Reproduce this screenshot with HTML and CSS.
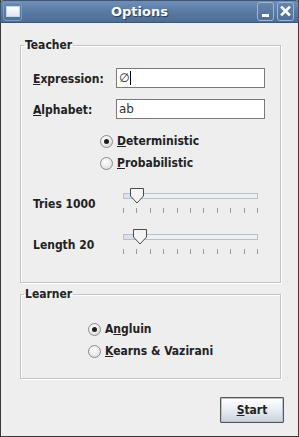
FILE: index.html
```html
<!DOCTYPE html>
<html>
<head>
<meta charset="utf-8">
<link rel="stylesheet" href="styles.css">
</head>
<body>
<div class="window">
  <div class="titlebar">
    <div class="tb-icon"><span class="tb-icon-inner"></span></div>
    <div class="tb-title">Options</div>
    <div class="tb-buttons">
      <div class="tb-btn"><svg width="15" height="17" viewBox="0 0 15 17"><rect x="4" y="11" width="7" height="3" fill="#fff"/></svg></div>
      <div class="tb-btn"><svg width="15" height="17" viewBox="0 0 15 17"><path d="M4 4.5 L11 11.5 M11 4.5 L4 11.5" stroke="#fff" stroke-width="2.6" stroke-linecap="square"/></svg></div>
    </div>
  </div>
  <div class="content">
    <fieldset class="group teacher">
      <legend>Teacher</legend>
      <div class="field-row first">
        <label class="flabel"><u>E</u>xpression:</label>
        <div class="textfield">∅<span class="caret"></span></div>
      </div>
      <div class="field-row">
        <label class="flabel"><u>A</u>lphabet:</label>
        <div class="textfield">ab</div>
      </div>
      <div class="radios teacher-radios">
        <div class="radio-row"><span class="radio checked"></span><span class="rlabel"><u>D</u>eterministic</span></div>
        <div class="radio-row"><span class="radio"></span><span class="rlabel"><u>P</u>robabilistic</span></div>
      </div>
      <div class="slider-row tries">
        <span class="slabel">Tries 1000</span>
        <div class="slider">
          <div class="track"><div class="track-fill" style="width:14px"></div></div>
          <svg class="thumb" style="left:6px" width="16" height="16" viewBox="0 0 16 16"><path d="M1.5 0.5 H14.5 V8 L8 15 L1.5 8 Z" fill="#f4f4f4" stroke="#4a4a4a" stroke-width="1"/></svg>
          <div class="ticks"><i></i><i></i><i></i><i></i><i></i><i></i><i></i><i></i><i></i><i></i><i></i></div>
        </div>
      </div>
      <div class="slider-row length">
        <span class="slabel">Length 20</span>
        <div class="slider">
          <div class="track"><div class="track-fill" style="width:16px"></div></div>
          <svg class="thumb" style="left:9px" width="16" height="16" viewBox="0 0 16 16"><path d="M1.5 0.5 H14.5 V8 L8 15 L1.5 8 Z" fill="#f4f4f4" stroke="#4a4a4a" stroke-width="1"/></svg>
          <div class="ticks"><i></i><i></i><i></i><i></i><i></i><i></i><i></i><i></i><i></i><i></i><i></i></div>
        </div>
      </div>
    </fieldset>
    <fieldset class="group learner">
      <legend>Learner</legend>
      <div class="radios learner-radios">
        <div class="radio-row"><span class="radio checked"></span><span class="rlabel">A<u>n</u>gluin</span></div>
        <div class="radio-row"><span class="radio"></span><span class="rlabel"><u>K</u>earns &amp; Vazirani</span></div>
      </div>
    </fieldset>
    <div class="button-row">
      <button class="btn"><u>S</u>tart</button>
    </div>
  </div>
</div>
</body>
</html>
```

FILE: styles.css
```css
html, body {
  margin: 0;
  padding: 0;
  background: #eeeeee;
}
body {
  font-family: "DejaVu Sans Condensed", "DejaVu Sans", sans-serif;
  font-stretch: condensed;
  font-size: 12px;
  color: #222;
}
.window {
  width: 299px;
  height: 437px;
  box-sizing: border-box;
  border: 1px solid #3a3a3a;
  border-top: none;
  background: #eeeeee;
  display: flex;
  flex-direction: column;
}
.titlebar {
  height: 23px;
  margin: 0 -1px;
  box-sizing: border-box;
  background: linear-gradient(#6f8fb7, #587aa3 50%, #4d6d96);
  border: 1px solid #3f5574;
  border-radius: 3px 3px 0 0;
  display: flex;
  align-items: center;
  padding: 0 4px 0 2px;
}
.tb-icon {
  width: 19px;
  height: 19px;
  box-sizing: border-box;
  border: 1px solid #7e99bd;
  border-radius: 3px;
  display: flex;
  align-items: center;
  justify-content: center;
}
.tb-icon-inner {
  width: 12px;
  height: 9px;
  background: linear-gradient(#ffffff, #dde6f2);
  border: 1px solid #c7d4e6;
}
.tb-title {
  flex: 1;
  text-align: center;
  color: #fff;
  font-family: "DejaVu Sans", sans-serif;
  font-stretch: normal;
  font-weight: bold;
  font-size: 13px;
  text-shadow: 1px 1px 1px #2c3d55;
}
.tb-buttons {
  display: flex;
  gap: 3px;
}
.tb-btn {
  width: 17px;
  height: 19px;
  box-sizing: border-box;
  border: 1px solid #a3b6d0;
  border-radius: 3px;
  background: linear-gradient(#6585ad, #4e6e97);
  display: flex;
  align-items: center;
  justify-content: center;
}
.content {
  flex: 1;
  padding: 15px 0 0 19px;
  display: flex;
  flex-direction: column;
}
fieldset.group {
  margin: 0;
  width: 261px;
  box-sizing: border-box;
  min-width: 0;
  border: 1px solid #c4c4c4;
  box-shadow: 1px 1px 0 #ffffff, inset 1px 1px 0 #ffffff;
  padding: 0;
}
legend {
  font-weight: bold;
  font-size: 12px;
  line-height: 14px;
  padding: 0 1px;
  margin-left: 3px;
  color: #222;
}
fieldset.teacher {
  height: 245px;
  padding-left: 12px;
}
fieldset.teacher legend {
  margin-left: -9px;
}
.field-row {
  display: flex;
  align-items: center;
  height: 20px;
  margin-top: 11px;
}
.field-row.first {
  margin-top: 16px;
}
.flabel {
  width: 83px;
  font-weight: bold;
  padding-top: 1px;
}
.textfield {
  width: 149px;
  height: 20px;
  box-sizing: border-box;
  background: #fff;
  border: 1px solid #7a7a7a;
  font-family: "DejaVu Sans", sans-serif;
  font-stretch: normal;
  font-size: 12px;
  line-height: 18px;
  padding-left: 2px;
  display: flex;
  align-items: center;
  color: #333;
}
.caret {
  display: inline-block;
  width: 1px;
  height: 14px;
  background: #000;
  margin-left: 1px;
}
.radios {
  display: flex;
  flex-direction: column;
}
.teacher-radios {
  margin-top: 11px;
  padding-left: 67px;
}
.radio-row {
  height: 22px;
  display: flex;
  align-items: center;
}
.radio {
  width: 13px;
  height: 13px;
  box-sizing: border-box;
  border-radius: 50%;
  border: 1px solid #8c8c8c;
  background: radial-gradient(circle at 40% 35%, #ffffff, #e6e6e6 60%, #cfcfcf);
  display: flex;
  align-items: center;
  justify-content: center;
  margin-right: 4px;
}
.radio.checked::after {
  content: "";
  width: 5px;
  height: 5px;
  border-radius: 50%;
  background: #1e1e1e;
}
.rlabel {
  font-weight: bold;
}
.slider-row {
  display: flex;
  align-items: flex-start;
  height: 27px;
}
.tries {
  margin-top: 13px;
}
.length {
  margin-top: 14px;
}
.slabel {
  width: 90px;
  font-weight: bold;
  margin-top: 10px;
}
.slider {
  position: relative;
  width: 135px;
  height: 27px;
}
.track {
  margin-top: 6px;
  height: 6px;
  box-sizing: border-box;
  border: 1px solid #b7c0cb;
  background: #eef1f4;
  position: relative;
}
.track-fill {
  height: 4px;
  background: #d9e1ea;
}
.thumb {
  position: absolute;
  top: 1px;
}
.ticks {
  display: flex;
  justify-content: space-between;
  margin-top: 9px;
  width: 135px;
}
.ticks i {
  display: block;
  width: 1px;
  height: 5px;
  background: #9a9a9a;
}
fieldset.learner {
  margin-top: 4px;
  height: 92px;
}
.learner-radios {
  margin-top: 17px;
  padding-left: 67px;
}
.button-row {
  display: flex;
  justify-content: flex-end;
  padding-right: 14px;
  margin-top: 18px;
}
.btn {
  width: 64px;
  height: 26px;
  box-sizing: border-box;
  border: 1px solid #555;
  box-shadow: inset 0 0 0 1px #b8c4d2;
  border-radius: 1px;
  background: linear-gradient(#ffffff, #edf1f5 40%, #c8d2de);
  font-family: "DejaVu Sans Condensed", "DejaVu Sans", sans-serif;
  font-stretch: condensed;
  font-weight: bold;
  font-size: 12px;
  color: #222;
  padding: 0;
}
```
